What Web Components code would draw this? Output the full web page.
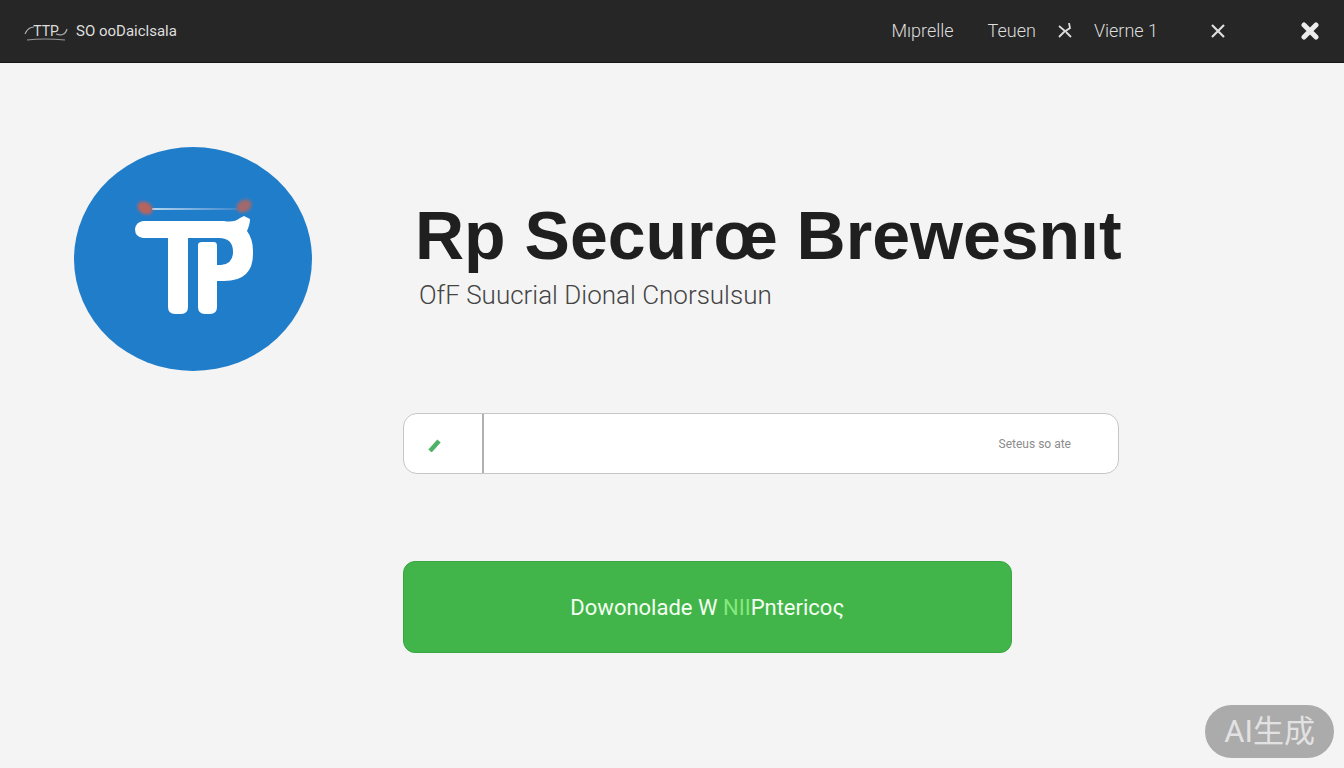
<!DOCTYPE html>
<html lang="en">
<head>
<meta charset="utf-8">
<meta name="viewport" content="width=device-width, initial-scale=1">
<title>Rp Secure</title>
<style>
    *
    {
        box-sizing: border-box;
    }

    body
    {
        margin: 0;
        min-height: 100vh;
        background-color: #f4f4f4;
        color: #1f1f1f;
        font-family: Roboto, "Noto Sans CJK SC", sans-serif;
    }
</style>
</head>
<body>
    <app-header></app-header>
    <app-hero>
        <app-logo slot="logo"></app-logo>
        <span slot="title">Rp Securœ Brewesnıt</span>
        <span slot="subtitle">OfF Suucrial Dional Cnorsulsun</span>
        <search-bar placeholder="Seteus so ate"></search-bar>
        <download-button>Dowonolade W <span style="color: #86e87c">NII</span>Pntericoς</download-button>
    </app-hero>
    <corner-badge>AI生成</corner-badge>

<script>
class AppHeader extends HTMLElement {

    constructor() {
        super();
        this.shadowDOM = this.attachShadow({mode: "open"});
    }

    connectedCallback() {
        this.render();
    }

    render() {
        this.shadowDOM.innerHTML = `
            <style>
                :host
                {
                    display: block;
                    background-color: #262626;
                    border-bottom: 1px solid #151515;
                    color: #dedede;
                }

                header
                {
                    display: flex;
                    align-items: center;
                    gap: 24px;
                    height: 62px;
                    padding: 0 10px 0 24px;
                    box-sizing: border-box;
                }

                .brand
                {
                    display: flex;
                    align-items: center;
                    gap: 8px;
                    margin-right: auto;
                    color: inherit;
                    font-size: 15px;
                    text-decoration: none;
                }

                .mark
                {
                    display: grid;
                    place-items: center;
                    font-size: 14px;
                }

                .mark > *
                {
                    grid-area: 1 / 1;
                }

                nav
                {
                    display: flex;
                    align-items: center;
                    gap: 10px;
                }

                nav a
                {
                    padding: 8px 12px;
                    color: inherit;
                    font-size: 18px;
                    font-weight: 300;
                    line-height: 24px;
                    text-decoration: none;
                }

                button
                {
                    display: grid;
                    place-items: center;
                    width: 48px;
                    height: 48px;
                    padding: 0;
                    border: 0;
                    background: none;
                    color: inherit;
                }

                .close
                {
                    margin-left: 20px;
                    color: #ececec;
                }

                svg
                {
                    display: block;
                    fill: none;
                    stroke: currentColor;
                }
            </style>

            <header>
                <a class="brand" href="#">
                    <span class="mark">
                        <svg width="44" height="20" viewBox="0 0 44 20">
                            <path d="M1 13 Q4 6 10 6 M32 13 Q41 16 43 8" stroke="#aaa" stroke-width="1.2"/>
                            <path d="M3 19 Q20 17 41 19" stroke="#999" stroke-width="1.2"/>
                        </svg>
                        <span>TTP</span>
                    </span>
                    <span>SO ooDaiclsala</span>
                </a>
                <nav>
                    <a href="#">Mıprelle</a>
                    <a href="#">Teuen</a>
                    <svg width="14" height="16" viewBox="0 0 14 16" stroke-width="1.8">
                        <path d="M1 3 L7 8 L1 14 M11 0 L12 5 L6 9 M8 9 L13 14"/>
                    </svg>
                    <a href="#">Vierne 1</a>
                </nav>
                <button type="button" aria-label="Dismiss">
                    <svg width="14" height="14" viewBox="0 0 14 14" stroke-width="2.2">
                        <path d="M1 1 L13 13 M13 1 L1 13"/>
                    </svg>
                </button>
                <button class="close" type="button" aria-label="Close">
                    <svg width="18" height="18" viewBox="0 0 18 18" stroke-width="5" stroke-linecap="round">
                        <path d="M3 3 L15 15 M15 3 L3 15"/>
                    </svg>
                </button>
            </header>`;
    }
}

class AppLogo extends HTMLElement {

    constructor() {
        super();
        this.shadowDOM = this.attachShadow({mode: "open"});
    }

    connectedCallback() {
        this.render();
    }

    render() {
        this.shadowDOM.innerHTML = `
            <style>
                :host
                {
                    display: block;
                }

                svg
                {
                    display: block;
                    width: 100%;
                    max-width: 238px;
                }
            </style>

            <svg viewBox="0 0 238 224" role="img">
                <defs>
                    <filter id="soft" x="-50%" y="-50%" width="200%" height="200%">
                        <feGaussianBlur stdDeviation="1.4"/>
                    </filter>
                    <linearGradient id="wire" x1="78" x2="163" y1="0" y2="0" gradientUnits="userSpaceOnUse">
                        <stop offset="0" stop-color="#b5d6f2"/>
                        <stop offset="1" stop-color="#3d88cb"/>
                    </linearGradient>
                </defs>
                <ellipse cx="119" cy="112" rx="119" ry="112" fill="#207dca"/>
                <!-- antenna -->
                <path d="M78 62 H163" stroke="url(#wire)" stroke-width="2"/>
                <ellipse cx="71" cy="61" rx="8" ry="6" transform="rotate(30 71 61)" fill="#b9645c" filter="url(#soft)"/>
                <ellipse cx="170" cy="59" rx="8" ry="6" transform="rotate(-30 170 59)" fill="#a2696c" filter="url(#soft)"/>
                <!-- monogram -->
                <g fill="#fff">
                    <path d="M69 74 H150 Q160 76 166 71 L170 69 L176 72 Q176 77 173 84 Q179 92 179 104 V107 Q179 134 150 134 H143 V160 Q143 167 136 167 H131 Q124 167 124 160 V98 Q124 95 128 95 H140 Q143 95 143 99 V118 H147 Q159 117 159 105 Q159 91 145 91 H114 V160 Q114 167 107 167 H101 Q94 167 94 160 V91 H69 Q61 90 61 82 Q62 75 69 74 Z"/>
                </g>
            </svg>`;
    }
}

class AppHero extends HTMLElement {

    constructor() {
        super();
        this.shadowDOM = this.attachShadow({mode: "open"});
    }

    connectedCallback() {
        this.render();
    }

    render() {
        this.shadowDOM.innerHTML = `
            <style>
                :host
                {
                    display: block;
                }

                main
                {
                    display: grid;
                    grid-template-columns: 238px minmax(0, 1fr);
                    align-items: start;
                    gap: 91px;
                    padding: 84px 225px 48px 74px;
                }

                .content
                {
                    padding-top: 48px;
                }

                h1, p
                {
                    margin: 0;
                }

                h1
                {
                    padding-left: 12px;
                    font-family: "Liberation Sans", Arial, sans-serif;
                    font-size: 68px;
                    font-weight: 700;
                    line-height: 80px;
                    white-space: nowrap;
                }

                p
                {
                    margin-top: 4px;
                    margin-bottom: 102px;
                    padding-left: 16px;
                    color: #444;
                    font-size: 26px;
                    font-weight: 300;
                    line-height: 32px;
                }

                @media only screen and (max-width: 1200px)
                {
                    main
                    {
                        gap: 48px;
                        padding: 48px 32px;
                    }

                    h1
                    {
                        white-space: normal;
                    }
                }

                @media only screen and (max-width: 780px)
                {
                    main
                    {
                        grid-template-columns: minmax(0, 1fr);
                    }
                }
            </style>

            <main>
                <slot name="logo"></slot>
                <div class="content">
                    <h1><slot name="title"></slot></h1>
                    <p><slot name="subtitle"></slot></p>
                    <slot></slot>
                </div>
            </main>`;
    }
}

class SearchBar extends HTMLElement {

    constructor() {
        super();
        this.shadowDOM = this.attachShadow({mode: "open"});
    }

    connectedCallback() {
        this.render();
    }

    render() {
        this.shadowDOM.innerHTML = `
            <style>
                *
                {
                    box-sizing: border-box;
                }

                :host
                {
                    display: block;
                    margin-bottom: 87px;
                }

                form
                {
                    display: flex;
                    height: 61px;
                    overflow: hidden;
                    border: 1px solid #c6c6c6;
                    border-radius: 14px;
                    background-color: #fff;
                }

                label
                {
                    display: flex;
                    align-items: center;
                    width: 80px;
                    padding-left: 23px;
                    border-right: 2px solid #b0b0b0;
                }

                input
                {
                    flex: 1;
                    min-width: 0;
                    padding: 0 47px 0 16px;
                    border: 0;
                    outline: 0;
                    background: none;
                    color: #333;
                    font: 12px Roboto, sans-serif;
                    text-align: right;
                }

                input::placeholder
                {
                    color: #8c8c8c;
                    opacity: 1;
                }
            </style>

            <form>
                <label for="query">
                    <svg width="16" height="16" viewBox="0 0 16 16">
                        <path d="M3 15 L12 5" stroke="#4fb367" stroke-width="4.5"/>
                    </svg>
                </label>
                <input id="query" type="text" placeholder="${this.getAttribute("placeholder")}">
            </form>`;
    }
}

class DownloadButton extends HTMLElement {

    constructor() {
        super();
        this.shadowDOM = this.attachShadow({mode: "open"});
    }

    connectedCallback() {
        this.render();
    }

    render() {
        this.shadowDOM.innerHTML = `
            <style>
                :host
                {
                    display: block;
                }

                button
                {
                    width: 85%;
                    height: 92px;
                    padding: 0 16px;
                    border: 1px solid #38a742;
                    border-radius: 12px;
                    background-color: #41b549;
                    color: #f4fff2;
                    font-family: inherit;
                    font-size: 22px;
                }

                button:hover
                {
                    background-color: #38a742;
                }
            </style>

            <button type="button"><slot></slot></button>`;
    }
}

class CornerBadge extends HTMLElement {

    constructor() {
        super();
        this.shadowDOM = this.attachShadow({mode: "open"});
    }

    connectedCallback() {
        this.render();
    }

    render() {
        this.shadowDOM.innerHTML = `
            <style>
                :host
                {
                    position: fixed;
                    right: 10px;
                    bottom: 10px;
                    padding: 0 19px;
                    border-radius: 27px;
                    background-color: #ababab;
                    color: #e2e2e2;
                    font-size: 31px;
                    line-height: 53px;
                }
            </style>

            <slot></slot>`;
    }
}

customElements.define("app-header", AppHeader);
customElements.define("app-logo", AppLogo);
customElements.define("app-hero", AppHero);
customElements.define("search-bar", SearchBar);
customElements.define("download-button", DownloadButton);
customElements.define("corner-badge", CornerBadge);
</script>
</body>
</html>
